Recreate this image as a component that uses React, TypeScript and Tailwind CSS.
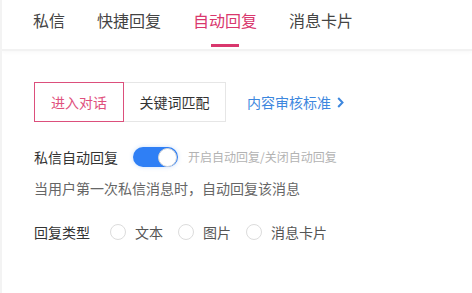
import { useState } from 'react';

const tabs = ['私信', '快捷回复', '自动回复', '消息卡片'];

const App = () => {
  const [activeTab] = useState('自动回复');
  const [enabled, setEnabled] = useState(true);
  const [mode, setMode] = useState('进入对话');
  const [replyType, setReplyType] = useState('');

  return (
    <div
      className="w-[472px] h-[293px] bg-white border-l-2 border-[#f3f3f3] overflow-hidden"
      style={{ fontFamily: '"Noto Sans CJK SC", "Noto Sans", sans-serif' }}
    >
      {/* Tabs */}
      <div className="h-[51px] flex pl-[31px] gap-8 border-b-2 border-[#f2f2f2] shadow-[0_2px_3px_rgba(0,0,0,0.025)]">
        {tabs.map((tab) => {
          const active = tab === activeTab;
          return (
            <div key={tab} className="relative h-full pt-[9px]">
              <span
                className={`block text-[16px] leading-[22px] ${
                  active ? 'text-[#d9376d]' : 'text-[#444]'
                }`}
              >
                {tab}
              </span>
              {active && (
                <span className="absolute bottom-[2px] left-1/2 -translate-x-1/2 w-7 h-[3px] bg-[#d9376d]" />
              )}
            </div>
          );
        })}
      </div>

      <div className="pl-[32px]">
        {/* Mode buttons */}
        <div className="mt-[31px] flex items-center">
          <button
            onClick={() => setMode('进入对话')}
            className={`w-[90px] h-10 text-[14px] border ${
              mode === '进入对话'
                ? 'border-[#dc4f7c] text-[#e0507d]'
                : 'border-[#e6e6e6] text-[#333]'
            }`}
          >
            进入对话
          </button>
          <button
            onClick={() => setMode('关键词匹配')}
            className={`w-[102px] h-10 text-[14px] border border-l-0 ${
              mode === '关键词匹配'
                ? 'border-[#dc4f7c] text-[#e0507d]'
                : 'border-[#e6e6e6] text-[#333]'
            }`}
          >
            关键词匹配
          </button>
          <a className="ml-[21px] flex items-center gap-[6px] text-[14px] text-[#3d87de] cursor-pointer">
            内容审核标准
            <svg width="7" height="11" viewBox="0 0 7 11" fill="none">
              <path d="M1.2 1 L5.5 5.5 L1.2 10" stroke="#3d87de" strokeWidth="2" />
            </svg>
          </a>
        </div>

        {/* Auto reply switch */}
        <div className="mt-[24px] flex items-center h-[22px]">
          <span className="text-[14px] text-[#333]">私信自动回复</span>
          <button
            onClick={() => setEnabled(!enabled)}
            className={`ml-[15px] w-[45px] h-5 rounded-full flex items-center px-[1px] shadow-[0_0_4px_rgba(47,126,245,0.25)] ${
              enabled ? 'bg-[#2f7ff5] justify-end' : 'bg-[#ccc] justify-start'
            }`}
          >
            <span className="w-[19px] h-[19px] rounded-full bg-white border border-[#d8d8d8]" />
          </button>
          <span className="ml-[10px] text-[12px] text-[#b3b3b3]">开启自动回复/关闭自动回复</span>
        </div>

        <p className="mt-[9px] text-[14px] leading-[22px] text-[#666]">
          当用户第一次私信消息时，自动回复该消息
        </p>

        {/* Reply type */}
        <div className="mt-[22px] flex items-center h-[22px]">
          <span className="text-[14px] text-[#333]">回复类型</span>
          <div className="ml-5 flex items-center gap-[15px]">
            {['文本', '图片', '消息卡片'].map((t) => (
              <label
                key={t}
                onClick={() => setReplyType(t)}
                className="flex items-center gap-[9px] cursor-pointer"
              >
                <span
                  className={`w-4 h-4 rounded-full border ${
                    replyType === t ? 'border-[#2f7ff5] border-[5px]' : 'border-[#dcdcdc]'
                  }`}
                />
                <span className="text-[14px] text-[#555]">{t}</span>
              </label>
            ))}
          </div>
        </div>
      </div>
    </div>
  );
};

export default App;
